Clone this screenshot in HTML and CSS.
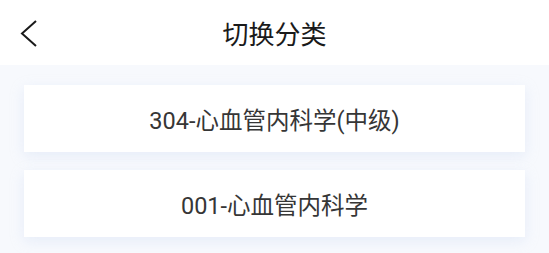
FILE: index.html
```html
<!DOCTYPE html>
<html lang="zh-CN">
  <head>
    <meta charset="UTF-8" />
    <meta name="viewport" content="width=device-width, initial-scale=1.0" />
    <title>切换分类</title>
    <link rel="stylesheet" href="styles.css">
  </head>
  <body>
    <div class="topbar">
      <span class="back">
        <svg width="18" height="29" viewBox="0 0 18 29">
          <polyline points="16,3 2,15.5 16,28" fill="none" stroke="#1a1a1a" stroke-width="2" />
        </svg>
      </span>
      <h1 class="title">切换分类</h1>
    </div>

    <div class="list">
      <div class="card">304-心血管内科学(中级)</div>
      <div class="card">001-心血管内科学</div>
    </div>
  </body>
</html>
```

FILE: styles.css
```css
body {
  margin: 0;
  height: 100vh;
  font-family: Roboto, "Noto Sans CJK SC", sans-serif;
  background-color: #f7f9fd;
  overflow: hidden;
}

/* 顶部栏 */
.topbar {
  height: 65px;
  background-color: #fff;
  display: flex;
  align-items: center;
  justify-content: center;
  position: relative;
}

.back {
  position: absolute;
  left: 20px;
  top: 18px;
  display: flex;
}

.title {
  margin: 0;
  font-size: 26px;
  font-weight: normal;
  color: #1a1a1a;
}

/* 分类列表 */
.list {
  padding: 20px 24px 0 24px;
  display: flex;
  flex-direction: column;
  gap: 18px;
}

.card {
  height: 67px;
  background-color: #fff;
  box-shadow: 0 4px 12px rgba(200, 215, 240, 0.35);
  display: flex;
  align-items: center;
  justify-content: center;
  font-size: 23.5px;
  color: #363636;
}
```
